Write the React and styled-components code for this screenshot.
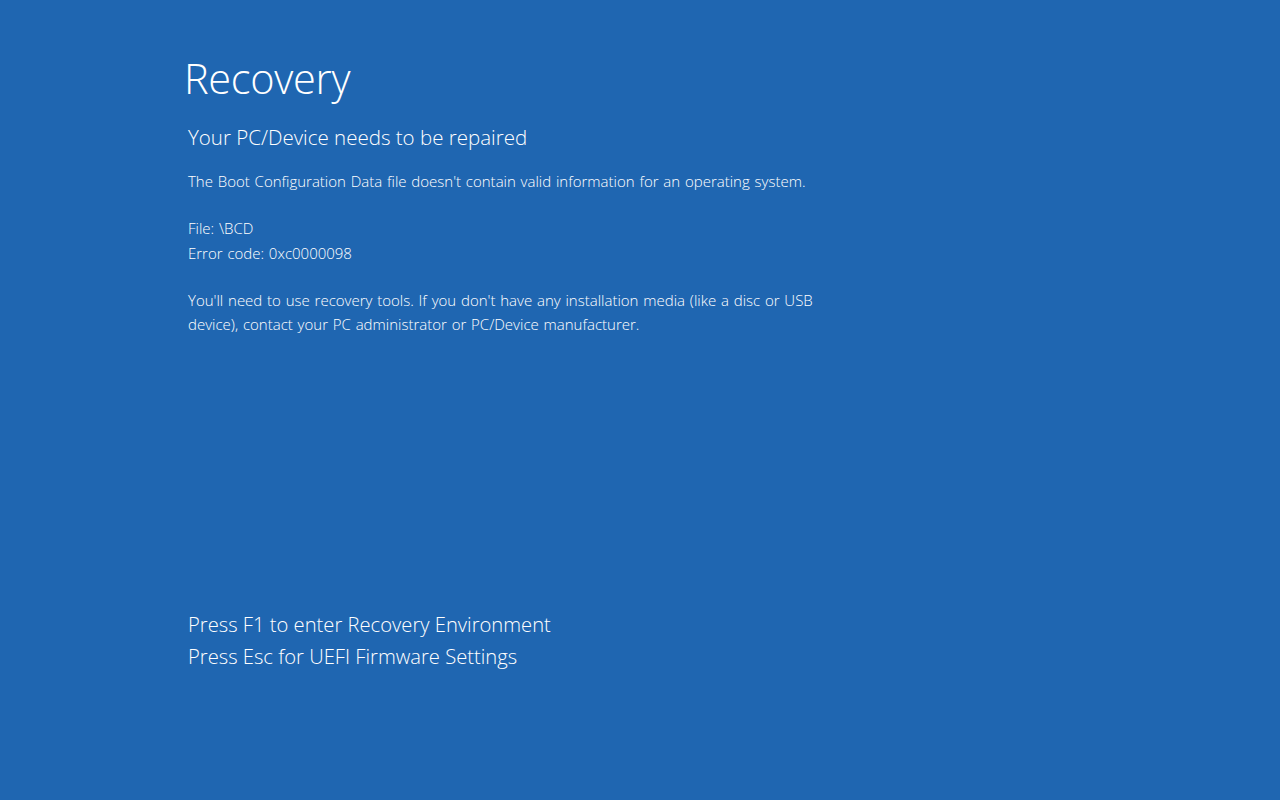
import React from "react"
import styled, { createGlobalStyle } from "styled-components"

const GlobalStyle = createGlobalStyle`
  html, body {
    margin: 0;
    padding: 0;
    background: #1f66b1;
  }
  body {
    color: #fff;
    font-family: "Open Sans", "Noto Sans", sans-serif;
    font-weight: 300;
  }
`

const Screen = styled.main`
  box-sizing: border-box;
  width: 1280px;
  height: 800px;
  background: #1f66b1;
  padding: 48px 0 0 186px;
  display: flex;
  flex-direction: column;
  overflow: hidden;
`

const Title = styled.h1`
  margin: 0 0 0 -2px;
  font-size: 41.5px;
  font-weight: 300;
  line-height: 60px;
  letter-spacing: -0.3px;
`

const Subtitle = styled.h2`
  margin: 14px 0 0 2px;
  font-size: 20.5px;
  font-weight: 300;
  line-height: 30px;
`

const Message = styled.div`
  margin: 17px 0 0 2px;
  display: flex;
  flex-direction: column;
  gap: 22.5px;
`

const Para = styled.p`
  margin: 0;
  font-size: 15px;
  line-height: 24.5px;
  word-spacing: 0.9px;
  white-space: nowrap;
`

const Prompts = styled.div`
  margin: 271px 0 0 2px;
  font-size: 20.2px;
  line-height: 32px;

  p {
    margin: 0;
  }
`

const App = () => (
  <>
    <GlobalStyle />
    <Screen>
      <Title>Recovery</Title>
      <Subtitle>Your PC/Device needs to be repaired</Subtitle>
      <Message>
        <Para>The Boot Configuration Data file doesn't contain valid information for an operating system.</Para>
        <Para>
          File: \BCD<br />
          Error code: 0xc0000098
        </Para>
        <Para>
          You'll need to use recovery tools. If you don't have any installation media (like a disc or USB<br />
          device), contact your PC administrator or PC/Device manufacturer.
        </Para>
      </Message>
      <Prompts>
        <p>Press F1 to enter Recovery Environment</p>
        <p>Press Esc for UEFI Firmware Settings</p>
      </Prompts>
    </Screen>
  </>
)

export default App
